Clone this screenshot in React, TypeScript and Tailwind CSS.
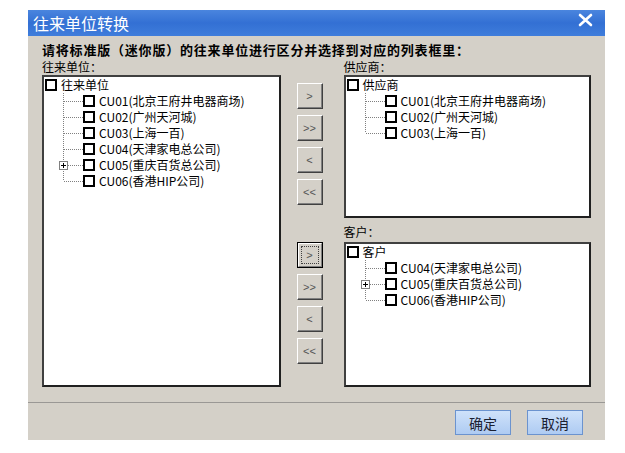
import React from 'react';

interface TreeItem {
  label: string;
  expandable?: boolean;
}

const ui = "font-['Noto_Sans_CJK_SC',sans-serif]";

function CheckBox() {
  return <span className="block h-[12px] w-[12px] shrink-0 border-2 border-black bg-white" />;
}

function Connector(props: { last: boolean; expandable?: boolean }) {
  return (
    <svg width="25" height="16" className="ml-[13px] shrink-0">
      <line x1="5.5" y1="0" x2="5.5" y2={props.last ? 8 : 16} stroke="#808080" strokeDasharray="1 1" />
      <line x1={props.expandable ? 10 : 6} y1="8.5" x2="25" y2="8.5" stroke="#808080" strokeDasharray="1 1" />
      {props.expandable && (
        <g>
          <rect x="1.5" y="4.5" width="8" height="8" fill="#fff" stroke="#808080" />
          <line x1="3" y1="8.5" x2="8" y2="8.5" stroke="#000" />
          <line x1="5.5" y1="6" x2="5.5" y2="11" stroke="#000" />
        </g>
      )}
    </svg>
  );
}

function Tree(props: { root: string; items: TreeItem[] }) {
  return (
    <div className="pl-[1px] text-[12px] leading-[16px] text-black">
      <div className="flex h-[16px] items-center">
        <CheckBox />
        <span className="ml-[4px] whitespace-nowrap">{props.root}</span>
      </div>
      {props.items.map((item, i) => (
        <div key={item.label} className="flex h-[16px] items-center">
          <Connector last={i === props.items.length - 1} expandable={item.expandable} />
          <CheckBox />
          <span className="ml-[4px] whitespace-nowrap">{item.label}</span>
        </div>
      ))}
    </div>
  );
}

function MoveButton(props: { label: string; focused?: boolean }) {
  if (props.focused) {
    return (
      <div className="h-[26px] w-[26px] border border-black">
        <div className="flex h-full w-full items-center justify-center border border-t-white border-l-white border-r-[#808080] border-b-[#808080] bg-[#d4d0c8] p-[2px]">
          <div className="flex h-full w-full items-center justify-center border border-dotted border-[#404040] font-['Liberation_Sans',sans-serif] text-[11px] text-[#555]">
            {props.label}
          </div>
        </div>
      </div>
    );
  }
  return (
    <div className="flex h-[26px] w-[26px] items-center justify-center border border-t-white border-l-white border-r-[#404040] border-b-[#404040] bg-[#d4d0c8] font-['Liberation_Sans',sans-serif] text-[11px] text-[#555] shadow-[inset_-1px_-1px_0_#808080]">
      {props.label}
    </div>
  );
}

export default function App() {
  const all: TreeItem[] = [
    { label: 'CU01(北京王府井电器商场)' },
    { label: 'CU02(广州天河城)' },
    { label: 'CU03(上海一百)' },
    { label: 'CU04(天津家电总公司)' },
    { label: 'CU05(重庆百货总公司)', expandable: true },
    { label: 'CU06(香港HIP公司)' },
  ];

  return (
    <div className={`h-[453px] w-[625px] bg-white pl-[28px] pt-[10px] ${ui}`}>
      <div className="flex h-[430px] w-[577px] flex-col bg-[#d4d0c8]">
        {/* title bar */}
        <div className="flex h-[26px] items-center justify-between bg-gradient-to-b from-[#4a85de] via-[#3370d4] to-[#3f7ddb] pl-[5px] pr-[12px]">
          <span className="text-[16px] leading-[20px] text-white">往来单位转换</span>
          <svg width="15" height="14" className="-mt-[6px]">
            <path d="M2 2 L13 12 M13 2 L2 12" stroke="#fff" strokeWidth="2.6" strokeLinecap="round" />
          </svg>
        </div>

        <div className="flex h-[366px] flex-col px-[14px] pt-[6px]">
          <div className="text-[13px] font-bold leading-[16px] tracking-[0.8px] whitespace-nowrap text-black">
            请将标准版（迷你版）的往来单位进行区分并选择到对应的列表框里：
          </div>

          <div className="flex">
            <div className="w-[239px]">
              <div className="h-[17px] text-[12px] leading-[17px] text-black">往来单位：</div>
              <div className="h-[312px] border-2 border-t-[#404040] border-l-[#404040] border-r-[#202020] border-b-[#202020] bg-white">
                <Tree root="往来单位" items={all} />
              </div>
            </div>

            <div className="ml-[16px] flex w-[26px] flex-col pt-[25px]">
              <div className="flex flex-col gap-[6px]">
                <MoveButton label=">" />
                <MoveButton label=">>" />
                <MoveButton label="<" />
                <MoveButton label="<<" />
              </div>
              <div className="mt-[37px] flex flex-col gap-[6px]">
                <MoveButton label=">" focused />
                <MoveButton label=">>" />
                <MoveButton label="<" />
                <MoveButton label="<<" />
              </div>
            </div>

            <div className="ml-[21px] w-[248px]">
              <div className="h-[17px] text-[12px] leading-[17px] text-black">供应商：</div>
              <div className="h-[143px] border-2 border-t-[#404040] border-l-[#404040] border-r-[#202020] border-b-[#202020] bg-white">
                <Tree root="供应商" items={all.slice(0, 3).map((x) => ({ label: x.label }))} />
              </div>
              <div className="h-[24px] pt-[6px] text-[12px] leading-[16px] text-black">客户：</div>
              <div className="h-[145px] border-2 border-t-[#404040] border-l-[#404040] border-r-[#202020] border-b-[#202020] bg-white">
                <Tree root="客户" items={all.slice(3)} />
              </div>
            </div>
          </div>
        </div>

        <div className="h-px bg-[#9a9895]" />

        <div className="flex flex-1 items-start justify-end gap-[16px] pr-[22px] pt-[7px]">
          <button className="h-[25px] w-[56px] border border-[#6b93cf] bg-gradient-to-b from-[#cfe2fa] to-[#aecbf2] text-[14px] leading-[20px] text-[#1a2030]">
            确定
          </button>
          <button className="h-[25px] w-[56px] border border-[#6b93cf] bg-gradient-to-b from-[#cfe2fa] to-[#aecbf2] text-[14px] leading-[20px] text-[#1a2030]">
            取消
          </button>
        </div>
      </div>
    </div>
  );
}
